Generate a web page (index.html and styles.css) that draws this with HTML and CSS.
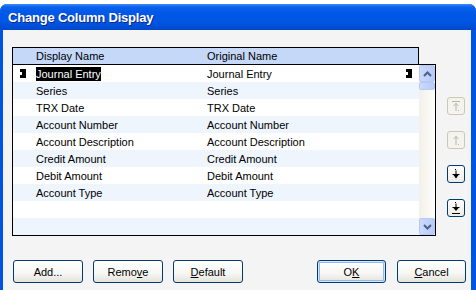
FILE: index.html
```html
<!DOCTYPE html>
<html lang="en">
  <head>
    <meta charset="UTF-8" />
    <title>Change Column Display</title>
    <link rel="stylesheet" href="styles.css">
  </head>
  <body>
    <div class="window">
      <div class="titlebar">
        <span class="title">Change Column Display</span>
      </div>

      <div class="client">
        <div class="main">
          <!-- Column list -->
          <div class="grid">
            <div class="grid-head">
              <span class="col col-display">Display Name</span>
              <span class="col col-orig">Original Name</span>
            </div>
            <div class="grid-body">
              <div class="rows">
                <div class="row">
                  <span class="mark">
                    <svg width="6" height="9" viewBox="0 0 6 9"><path d="M0 0H6V9H0V6H2V3H0Z" fill="#000"/></svg>
                  </span>
                  <span class="col col-display"><span class="sel">Journal Entry</span></span>
                  <span class="col col-orig">Journal Entry</span>
                  <span class="mark-end">
                    <svg width="6" height="9" viewBox="0 0 6 9"><path d="M0 0H6V9H0V6H2V3H0Z" fill="#000"/></svg>
                  </span>
                </div>
                <div class="row alt">
                  <span class="mark"></span>
                  <span class="col col-display">Series</span>
                  <span class="col col-orig">Series</span>
                </div>
                <div class="row">
                  <span class="mark"></span>
                  <span class="col col-display">TRX Date</span>
                  <span class="col col-orig">TRX Date</span>
                </div>
                <div class="row alt">
                  <span class="mark"></span>
                  <span class="col col-display">Account Number</span>
                  <span class="col col-orig">Account Number</span>
                </div>
                <div class="row">
                  <span class="mark"></span>
                  <span class="col col-display">Account Description</span>
                  <span class="col col-orig">Account Description</span>
                </div>
                <div class="row alt">
                  <span class="mark"></span>
                  <span class="col col-display">Credit Amount</span>
                  <span class="col col-orig">Credit Amount</span>
                </div>
                <div class="row">
                  <span class="mark"></span>
                  <span class="col col-display">Debit Amount</span>
                  <span class="col col-orig">Debit Amount</span>
                </div>
                <div class="row alt">
                  <span class="mark"></span>
                  <span class="col col-display">Account Type</span>
                  <span class="col col-orig">Account Type</span>
                </div>
                <div class="row"></div>
                <div class="row alt"></div>
              </div>

              <div class="scrollbar">
                <div class="sb-button">
                  <svg width="9" height="6" viewBox="0 0 9 6"><path d="M1 5L4.5 1.5L8 5" fill="none" stroke="#4d6185" stroke-width="2"/></svg>
                </div>
                <div class="sb-thumb"></div>
                <div class="sb-track"></div>
                <div class="sb-button">
                  <svg width="9" height="6" viewBox="0 0 9 6"><path d="M1 1L4.5 4.5L8 1" fill="none" stroke="#4d6185" stroke-width="2"/></svg>
                </div>
              </div>
            </div>
          </div>

          <!-- Move buttons -->
          <div class="side">
            <div class="side-button disabled">
              <svg width="12" height="12" viewBox="0 0 12 12"><path d="M2 1.5H10M6 3V11M3.5 6L6 3.5L8.5 6" fill="none" stroke="#b8b6a8" stroke-width="1"/><path d="M8 10.5H9" stroke="#b8b6a8"/></svg>
            </div>
            <div class="side-button disabled">
              <svg width="12" height="12" viewBox="0 0 12 12"><path d="M6 2V11M3.5 5L6 2.5L8.5 5" fill="none" stroke="#b8b6a8" stroke-width="1"/><path d="M8 10.5H9" stroke="#b8b6a8"/></svg>
            </div>
            <div class="side-button">
              <svg width="12" height="12" viewBox="0 0 12 12"><path d="M6 2.5V9.5M5 1.5H6M2.5 6.5H9.5" fill="none" stroke="#000" stroke-width="1"/><path d="M3.5 7L6 10.5L8.5 7Z" fill="#000"/></svg>
            </div>
            <div class="side-button">
              <svg width="12" height="12" viewBox="0 0 12 12"><path d="M6 1.5V8M5 0.5H6M2.5 5.5H9.5M2 11.5H10" fill="none" stroke="#000" stroke-width="1"/><path d="M3.5 6L6 9L8.5 6Z" fill="#000"/></svg>
            </div>
          </div>
        </div>

        <div class="actions">
          <div class="group">
            <button class="button">Add...</button>
            <button class="button">Remo<u>v</u>e</button>
            <button class="button"><u>D</u>efault</button>
          </div>
          <div class="group group-right">
            <button class="button default-button">O<u>K</u></button>
            <button class="button"><u>C</u>ancel</button>
          </div>
        </div>
      </div>
    </div>
  </body>
</html>
```

FILE: styles.css
```css
body {
  margin: 0;
  background-color: white;
  font-family: "Liberation Sans", Arial, sans-serif;
  font-size: 11px;
  color: black;
  overflow: hidden;
}

.window {
  margin-top: 4px;
  height: 286px;
  display: flex;
  flex-direction: column;
  border-radius: 7px 7px 0 0;
  background-color: #0054e3;
  overflow: hidden;
}

.titlebar {
  height: 26px;
  display: flex;
  align-items: center;
  padding-left: 8px;
  background: linear-gradient(#3d8cf9 0, #0a61ee 3px, #0058e6 9px, #0055e4 18px, #0048cc 26px);
}

.title {
  color: white;
  font-weight: bold;
  font-size: 13px;
  letter-spacing: -0.2px;
  text-shadow: 1px 1px #0b2a8a;
  margin-top: 1px;
}

.client {
  flex: 1;
  margin: 0 5px 0 3px;
  background-color: #f4f4f4;
  padding: 17px 0 0 9px;
}

.main {
  display: flex;
  gap: 11px;
}

/* Grid */
.grid {
  width: 424px;
}

.grid-head {
  width: 407px;
  height: 17px;
  display: flex;
  align-items: center;
  padding-left: 23px;
  box-sizing: border-box;
  border: 1px solid black;
  border-bottom: none;
  background-color: #c5d8f8;
}

.col-display {
  width: 171px;
  flex: none;
}

.col-orig {
  flex: 1;
}

.grid-body {
  display: flex;
  border: 1px solid black;
  background-color: white;
}

.rows {
  flex: 1;
}

.row {
  height: 17px;
  display: flex;
  align-items: center;
}

.row.alt {
  background-color: #eef5fd;
}

.mark {
  width: 23px;
  flex: none;
  display: flex;
  padding-left: 7px;
  box-sizing: border-box;
}

.mark-end {
  width: 13px;
  flex: none;
  display: flex;
}

.sel {
  background-color: black;
  color: white;
  padding: 1px 0;
}

.scrollbar {
  width: 16px;
  display: flex;
  flex-direction: column;
  background: linear-gradient(to right, #f2f0e8, #fdfdfb);
}

.sb-button,
.sb-thumb {
  height: 15px;
  display: flex;
  align-items: center;
  justify-content: center;
  border: 1px solid #b7c9f3;
  border-radius: 2px;
  background: linear-gradient(to right, #cbdafc, #b6cbf9);
}

.sb-thumb {
  height: 6px;
}

.sb-track {
  flex: 1;
}

/* Move buttons */
.side {
  display: flex;
  flex-direction: column;
  gap: 16px;
  margin-top: 50px;
}

.side-button {
  width: 18px;
  height: 18px;
  box-sizing: border-box;
  display: flex;
  align-items: center;
  justify-content: center;
  border: 1px solid #003c74;
  border-radius: 3px;
  background: linear-gradient(#ffffff, #ecebe6);
}

.side-button.disabled {
  border-color: #cac8bb;
  background: #f4f3ee;
}

/* Bottom buttons */
.actions {
  display: flex;
  justify-content: space-between;
  margin-top: 24px;
  padding: 0 5px 0 1px;
}

.group {
  display: flex;
  gap: 10px;
}

.group-right {
  gap: 11px;
}

.button {
  width: 70px;
  height: 23px;
  padding: 0;
  font-family: "Liberation Sans", Arial, sans-serif;
  font-size: 11px;
  color: black;
  border: 1px solid #003c74;
  border-radius: 3px;
  background: linear-gradient(#ffffff 0, #f6f6f3 60%, #e4e2da 100%);
}

.group-right .button {
  width: 69px;
}

.default-button {
  box-shadow: inset 0 0 0 1px #cee7ff, inset 0 0 0 2px #98b8ea;
}
```
